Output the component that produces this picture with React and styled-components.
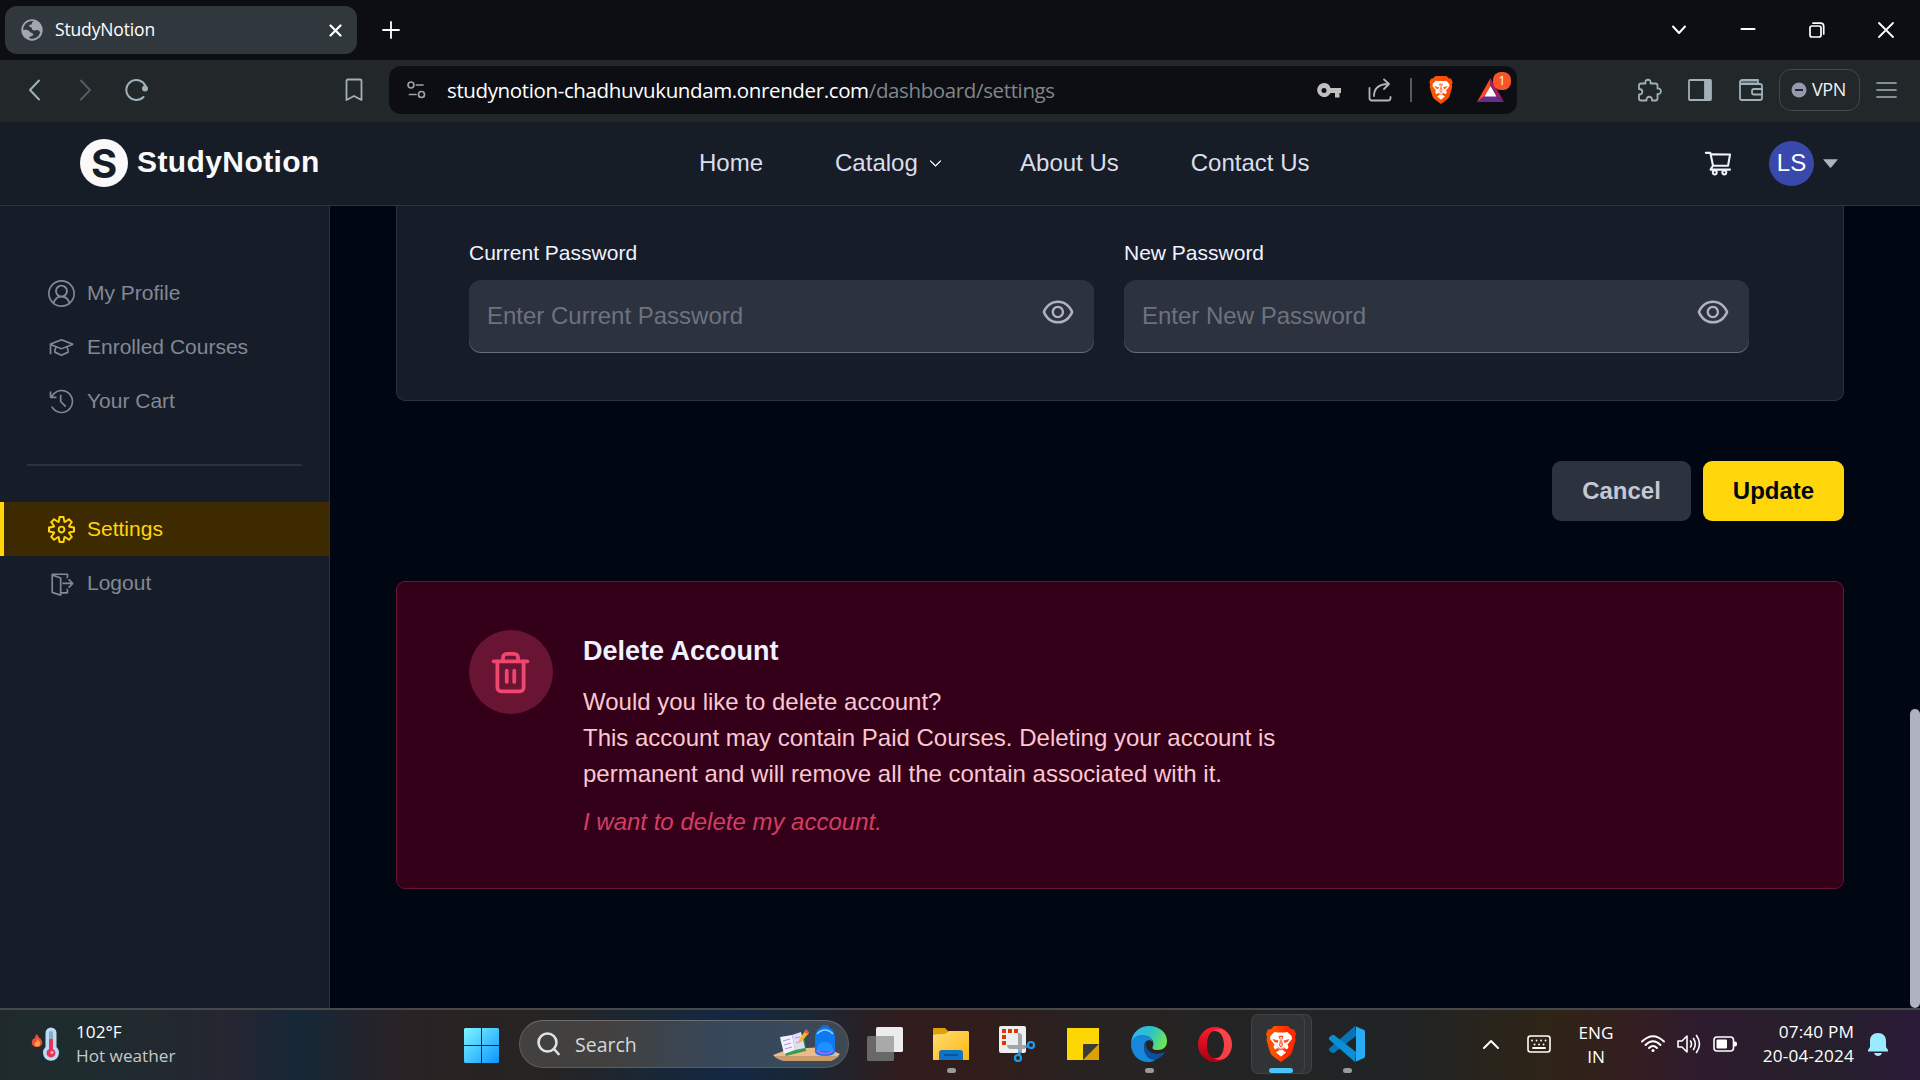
import React from "react";
import styled, { createGlobalStyle } from "styled-components";
import {
  VscAccount,
  VscMortarBoard,
  VscHistory,
  VscSettingsGear,
  VscSignOut,
} from "react-icons/vsc";
import { AiOutlineShoppingCart, AiFillCaretDown, AiOutlineEye } from "react-icons/ai";
import { BsChevronDown } from "react-icons/bs";
import { FiTrash2 } from "react-icons/fi";

const GlobalStyle = createGlobalStyle`
  * { box-sizing: border-box; }
  html, body { margin: 0; background: #000612; overflow: hidden; }
  body { font-family: "Liberation Sans", Arial, sans-serif; }
  svg { display: block; flex: none; }
  button { border: 0; font: inherit; }
`;

const uiFont = `"Open Sans", "Noto Sans", sans-serif`;

const Screen = styled.div`
  width: 1920px;
  height: 1080px;
  display: grid;
  grid-template-rows: 60px 62px 84px 802px 72px;
  overflow: hidden;
`;

/* ---------- browser chrome ---------- */

const TabStrip = styled.div`
  display: flex;
  align-items: center;
  padding: 0 24px 0 5px;
  background: #0d0e13;
  color: #fff;
`;

const Tab = styled.div`
  width: 352px;
  height: 48px;
  border-radius: 12px;
  background: #30383d;
  display: flex;
  align-items: center;
  padding: 0 15px 0 16px;
  font: 17.5px ${uiFont};
`;

const TabTitle = styled.span`
  flex: 1;
  margin-left: 12px;
  padding-bottom: 2px;
  letter-spacing: -0.15px;
`;

const NewTab = styled.div`
  margin-left: 25px;
`;

const WindowControls = styled.div`
  margin-left: auto;
  display: grid;
  grid-template-columns: repeat(4, 69px);
  justify-items: center;
  align-items: center;
  margin-right: -24px;
`;

const Toolbar = styled.div`
  display: flex;
  align-items: center;
  padding: 0 22px 2px 28px;
  background: #22272a;
`;

const ToolIcon = styled.span`
  display: flex;
  margin-left: ${(p) => p.$gap || 0}px;
`;

const AddressBar = styled.div`
  width: 1128px;
  height: 48px;
  margin-left: 26px;
  border-radius: 12px;
  background: #0d0e13;
  display: flex;
  align-items: center;
  padding: 0 13px 0 18px;
`;

const Url = styled.div`
  margin-left: 21px;
  margin-right: auto;
  font: 20.5px ${uiFont};
  letter-spacing: -0.37px;
  color: #fff;
  white-space: nowrap;
`;

const UrlPath = styled.span`
  color: #80868b;
`;

const BarDivider = styled.span`
  width: 2px;
  height: 24px;
  margin-left: 18px;
  background: #55585c;
`;

const BadgeHost = styled.span`
  position: relative;
  margin-left: 24px;
`;

const CountBadge = styled.span`
  position: absolute;
  left: 16px;
  top: -6px;
  width: 18px;
  height: 18px;
  border-radius: 8px;
  background: #fb542b;
  color: #fff;
  font: 12px/18px ${uiFont};
  text-align: center;
`;

const VpnPill = styled.div`
  width: 81px;
  height: 42px;
  margin-left: 16px;
  border: 1px solid #3f4a4e;
  border-radius: 12px;
  display: flex;
  align-items: center;
  gap: 5px;
  padding-left: 11px;
  color: #f1f1f4;
  font: 18px ${uiFont};
  letter-spacing: -0.4px;
`;

const VpnText = styled.span`
  padding-bottom: 2px;
`;

/* ---------- site header ---------- */

const Header = styled.header`
  display: flex;
  align-items: center;
  padding: 0 79px 1px 80px;
  background: #161d27;
  border-bottom: 1px solid #2c333f;
`;

const Brand = styled.div`
  width: 619px;
  display: flex;
  align-items: center;
  gap: 9px;
  color: #f9f9f9;
`;

const BrandMark = styled.span`
  width: 48px;
  height: 48px;
  border-radius: 50%;
  background: #f9f9f9;
  color: #161d27;
  display: flex;
  align-items: center;
  justify-content: center;
  font: 700 40px Inter, sans-serif;
`;

const BrandName = styled.span`
  font: 700 30px "Liberation Sans", Arial, sans-serif;
  letter-spacing: 0.4px;
  padding-bottom: 3px;
`;

const Nav = styled.nav`
  display: flex;
  align-items: center;
  gap: 72px;
  color: #dbddea;
  font-size: 24px;
`;

const NavItem = styled.span`
  display: flex;
  align-items: center;
  gap: 11px;
  width: ${(p) => p.$width || "auto"};
  white-space: nowrap;
`;

const Actions = styled.div`
  margin-left: auto;
  display: flex;
  align-items: center;
  color: #f1f2ff;
`;

const Avatar = styled.span`
  width: 45px;
  height: 45px;
  margin: 0 6px 0 36px;
  border-radius: 50%;
  background: #3949ab;
  color: #fff;
  display: flex;
  align-items: center;
  justify-content: center;
  font-size: 24px;
`;

const CaretTint = styled.span`
  color: #afb2bf;
`;

/* ---------- dashboard ---------- */

const Dashboard = styled.div`
  display: grid;
  grid-template-columns: 330px 1fr 10px;
  background: #000612;
  overflow: hidden;
`;

const Sidebar = styled.aside`
  background: #161d29;
  border-right: 1px solid #2c333f;
  padding-top: 60px;
`;

const SideLink = styled.div`
  height: 54px;
  display: flex;
  align-items: center;
  gap: 12px;
  padding-left: 44px;
  border-left: 4px solid ${(p) => (p.$active ? "#ffd60a" : "transparent")};
  background: ${(p) => (p.$active ? "#3d2a01" : "transparent")};
  color: ${(p) => (p.$active ? "#ffd60a" : "#838894")};
  font-size: 21px;
`;

const SideRule = styled.div`
  height: 2px;
  margin: 36px 27px;
  background: #2c333f;
`;

const Content = styled.main`
  padding: 0 66px;
`;

const PasswordCard = styled.section`
  height: 195px;
  padding: 31px 94px 0 72px;
  border: 1px solid #2c333f;
  border-top: 0;
  border-radius: 0 0 9px 9px;
  background: #161d29;
  display: flex;
  gap: 30px;
`;

const Field = styled.label`
  width: 625px;
  display: flex;
  flex-direction: column;
  gap: 13px;
  color: #f1f2ff;
  font-size: 21px;
  line-height: 28px;
`;

const FieldLabel = styled.span`
  padding-top: 2px;
`;

const InputBox = styled.div`
  height: 72px;
  display: flex;
  align-items: center;
  justify-content: space-between;
  padding: 0 18px;
  border-radius: 12px;
  background: #2c333f;
  box-shadow: 0 1px 0 rgba(255, 255, 255, 0.36);
  color: #6e727f;
  font-size: 24px;
`;

const EyeWrap = styled.span`
  color: #afb2bf;
  padding-bottom: 8px;
`;

const ButtonRow = styled.div`
  display: flex;
  justify-content: flex-end;
  gap: 12px;
  margin: 60px 0;
`;

const ActionButton = styled.button`
  width: ${(p) => (p.$primary ? 141 : 139)}px;
  height: 60px;
  padding: 0;
  border-radius: 9px;
  background: ${(p) => (p.$primary ? "#ffd60a" : "#2c333f")};
  color: ${(p) => (p.$primary ? "#000814" : "#c5c7d4")};
  font-size: 24px;
  font-weight: 700;
`;

const DangerCard = styled.section`
  height: 308px;
  padding: 48px 72px;
  border: 1px solid #691432;
  border-radius: 9px;
  background: #340019;
  display: flex;
  gap: 30px;
`;

const TrashCircle = styled.div`
  width: 84px;
  height: 84px;
  padding-right: 2px;
  border-radius: 50%;
  background: #691432;
  color: #ef476f;
  display: flex;
  align-items: center;
  justify-content: center;
`;

const DangerBody = styled.div`
  width: 720px;
  font-size: 24px;
  line-height: 36px;
  color: #fbc7d1;
`;

const DangerTitle = styled.h2`
  margin: 0 0 12px;
  font-size: 27px;
  font-weight: 700;
  line-height: 42px;
  color: #f1f2ff;
`;

const Paragraph = styled.p`
  margin: 0;
`;

const DangerLink = styled.p`
  margin: 12px 0 0;
  font-style: italic;
  color: #d43d63;
`;

const ScrollTrack = styled.div`
  display: flex;
  align-items: flex-end;
`;

const ScrollThumb = styled.div`
  width: 10px;
  height: 299px;
  border-radius: 5px;
  background: #afb2bf;
`;

/* ---------- taskbar ---------- */

const Taskbar = styled.footer`
  display: grid;
  grid-template-columns: 464px 55px 330px 3px 528px 1fr;
  align-items: center;
  border-top: 2px solid #47484a;
  font-family: ${uiFont};
  color: #fff;
  background: linear-gradient(
    90deg,
    #202a2c 0,
    #1e2c2e 80px,
    #252631 230px,
    #162737 300px,
    #2a2225 400px,
    #272421 540px,
    #192735 650px,
    #142844 730px,
    #192735 800px,
    #301c1d 900px,
    #311d1b 980px,
    #272322 1100px,
    #202425 1400px,
    #2f2417 1550px,
    #341e21 1640px,
    #2e1b2e 1700px,
    #25202b 1830px,
    #2c1a39 1920px
  );
`;

const Weather = styled.div`
  display: flex;
  align-items: center;
  gap: 15px;
  padding: 0 0 2px 31px;
  font-size: 17.2px;
  line-height: 24px;
`;

const TwoLines = styled.div`
  display: flex;
  flex-direction: column;
  align-items: ${(p) => p.$align || "flex-start"};
  letter-spacing: ${(p) => p.$spacing || "0"};
  white-space: nowrap;
`;

const Muted = styled.span`
  color: #c6c8ca;
`;

const SearchPill = styled.div`
  height: 48px;
  margin-top: -2px;
  border: 1px solid #5d5d5f;
  border-top-color: #6e6e71;
  border-radius: 24px;
  display: flex;
  align-items: center;
  padding: 0 8px 0 17px;
  background: linear-gradient(90deg, #434140 0, #434140 90px, #36475a 200px, #37495b 270px, #414850 330px);
  color: #d6d9dc;
  font-size: 19.5px;
`;

const SearchText = styled.span`
  flex: 1;
  margin-left: 15px;
`;

const Apps = styled.div`
  display: grid;
  grid-template-columns: repeat(8, 66px);
  height: 70px;
`;

const AppSlot = styled.div`
  display: grid;
  grid-template-rows: 34px 5px;
  row-gap: 7px;
  padding-top: 17px;
  justify-items: center;
  align-items: center;
  align-content: start;
`;

const Indicator = styled.span`
  width: ${(p) => (p.$active ? 24 : 9)}px;
  height: 5px;
  border-radius: 3px;
  background: ${(p) => (p.$active ? "#4cc2ff" : "#9a9a9b")};
`;

const ActiveTile = styled.div`
  width: 54px;
  height: 60px;
  margin: 4px 0 0 3px;
  padding: 12px 0 0 6px;
  border: 1px solid #414243;
  border-radius: 7px;
  background: #323334;
  box-shadow: 7px 0 0 -1px #303132, 7px 0 0 0 #414243;
  display: grid;
  grid-template-rows: 34px 5px;
  row-gap: 7px;
  justify-items: center;
  align-items: center;
  align-content: start;
`;

const Tray = styled.div`
  display: flex;
  align-items: center;
  padding: 0 32px 2px 103px;
  font-size: 17.2px;
  line-height: 24px;
`;

const TrayItem = styled.span`
  display: flex;
  width: ${(p) => p.$width || "auto"};
  justify-content: ${(p) => p.$justify || "flex-start"};
  margin-left: ${(p) => p.$gap || 0}px;
  padding-top: ${(p) => p.$drop || 0}px;
`;

/* ---------- drawings ---------- */

const Line = ({ w, h, color = "#fff", sw = 2, children }) => (
  <svg
    width={w}
    height={h}
    viewBox={`0 0 ${w} ${h}`}
    fill="none"
    stroke={color}
    strokeWidth={sw}
    strokeLinecap="round"
    strokeLinejoin="round"
  >
    {children}
  </svg>
);

const toolColor = "#a0b1b9";

const Globe = () => (
  <svg width="22" height="22" viewBox="0 0 22 22">
    <circle cx="11" cy="11" r="10.7" fill="#a3a6ae" />
    <path d="M13 2.2C10.6 3 10.7 4.4 10.9 5.4C8.4 5.3 7.8 6.4 8.3 7.5C9 8.5 11 8 11 9.7C11 11.4 12.6 11.7 14.6 11.2C17.4 10.5 18.6 12.3 19.2 13.4A8.8 8.8 0 0 1 8.2 19.3C8 17.8 9.3 17.2 11.1 16.9C12.5 16.6 12.6 14.7 11.2 14.3C9 13.8 8.3 11.5 6.2 11.1C4.4 10.7 3.1 10.9 2.2 11A8.8 8.8 0 0 1 13 2.2Z" fill="#30383d" />
  </svg>
);

const BraveMark = ({ width, height, from, to }) => (
  <svg width={width} height={height} viewBox="0 0 30 36">
    <defs>
      <linearGradient id={`brave-${width}`}>
        <stop offset="0.3" stopColor={from} />
        <stop offset="0.7" stopColor={to} />
      </linearGradient>
    </defs>
    <path
      d="M8 0H22L25 3L28 3.5L30 8L29 11L29.5 14L26 26Q25 29 22 31L15 36L8 31Q5 29 4 26L.5 14L1 11L0 8L2 3.5L5 3Z"
      fill={`url(#brave-${width})`}
    />
    <path
      d="M8.500 6L12 6.500H18L21.500 6L25.500 10L26 13L21.500 18.500L22.500 21L21 23.500L18.500 22L16 23.500L20 26.500L15 30.500L10 26.500L14 23.500L11.500 22L9 23.500L7.500 21L8.500 18.500L4 13L4.500 10Z"
      fill="#fff"
    />
    <path
      d="M6.500 13L12.500 14.500L11.500 17L8.500 16ZM23.500 13L17.500 14.500L18.500 17L21.500 16ZM12.500 10L15 9.500L17.500 10L16 14L17 19.500L15 21.500L13 19.500L14 14ZM10.500 19.500L15 23L19.500 19.500L15 24.500Z"
      fill={to}
      opacity="0.85"
    />
    <path d="M14.300 11H15.700L15.200 17L16 19.500H14L14.800 17Z" fill="#fff" />
  </svg>
);

const BatMark = () => (
  <svg width="27" height="24" viewBox="0 0 27 24">
    <path d="M13.5 0L0 24L8 18L13.5 8Z" fill="#ff4724" />
    <path d="M13.5 0L27 24L19 18L13.5 8Z" fill="#9e1f63" />
    <path d="M0 24H27L19 18H8Z" fill="#662d91" />
    <path d="M13.5 8L19.5 18.5H7.5Z" fill="#fff" />
  </svg>
);

const Thermometer = () => (
  <svg width="30" height="36" viewBox="0 0 30 36">
    <path d="M5.5 8C7 10 8 10.500 8.300 12C9.500 11.500 9.800 13 11 15C12 19 9 21 6 21C3 21 0 19 1 15C1.500 13 2.500 12.500 3 13C4 11 4.500 10 5.500 8Z" fill="#e8503a" />
    <path d="M6.500 13C8 15 9.500 16 9 18.500C8.500 21 4 21 3.500 18.500C3.500 16.500 6 16 6.500 13Z" fill="#ffa63b" />
    <path d="M14.500 7A5.500 5.500 0 0 1 25.500 7V21A8 8 0 1 1 14.500 21Z" fill="#b9dcf7" />
    <rect x="18" y="5" width="4" height="13" rx="2" fill="#93a9ba" />
    <path d="M18 13H22V23A4.500 4.500 0 1 1 18 23Z" fill="#e93457" />
    <circle cx="21" cy="26.500" r="1.500" fill="#ffb0bd" />
  </svg>
);

const WindowsLogo = () => (
  <svg width="35" height="35" viewBox="0 0 35 35">
    <defs>
      <linearGradient id="win" x1="0" y1="0" x2="1" y2="1">
        <stop offset="0" stopColor="#7ff6ff" />
        <stop offset="1" stopColor="#0b96fb" />
      </linearGradient>
    </defs>
    <path d="M1 0H17V17H0V1ZM18 0H34L35 1V17H18ZM0 18H17V35H1L0 34ZM18 18H35V34L34 35H18Z" fill="url(#win)" />
  </svg>
);

const DeskArt = () => (
  <svg width="67" height="38" viewBox="0 0 67 38">
    <path d="M0 30L16 24L52 22L67 29Q61 36 56 36H12Q5 35 0 30Z" fill="#e8bd8b" />
    <path d="M1 31H66Q60 36 56 36H12Q5 35 1 31Z" fill="#c99c6b" />
    <path d="M7 15L31 12L33 26L13 31Z" fill="#3d9b4e" />
    <path d="M7 12L19 10L22 25L11 29Z" fill="#f3efff" />
    <path d="M19 10L28 7L32 23L22 25Z" fill="#e2daf6" />
    <path d="M10 16L17 14M11 20L18 18M12 24L19 22M22 13L27 12M23 18L29 16" stroke="#a89cc9" strokeWidth="1" />
    <path d="M25 18L27 13L33 5L36 8L29 16Z" fill="#f8b62f" />
    <path d="M31 7L33 4L36 7L34 9Z" fill="#f0554a" />
    <path d="M48 3Q52 -2 56 3" fill="none" stroke="#1768d8" strokeWidth="2" />
    <path d="M42 12Q43 2 52 2Q61 2 62 12V27Q61 31 52 31Q43 31 42 27Z" fill="#0f7af0" />
    <path d="M44 9Q52 1 60 9" fill="none" stroke="#7fd6ff" strokeWidth="1.500" />
    <path d="M44 26V24Q45 17 52 17Q59 17 60 24V26Z" fill="#1b93ff" />
    <path d="M44 25Q46 28.500 52 28.500Q58 28.500 60 25" fill="none" stroke="#a861f0" strokeWidth="2" />
  </svg>
);

const TaskView = () => (
  <svg width="36" height="34" viewBox="0 0 36 34">
    <rect x="9" y="0" width="27" height="25" rx="1.500" fill="#ececec" />
    <rect x="0" y="9" width="27" height="25" rx="1.500" fill="#686868" />
    <path d="M9 9H27V25H9Z" fill="#a9a9a9" />
  </svg>
);

const Explorer = () => (
  <svg width="36" height="34" viewBox="0 0 36 34">
    <defs>
      <linearGradient id="fold" x1="0" y1="0" x2="1" y2="1">
        <stop offset="0" stopColor="#ffdc75" />
        <stop offset="1" stopColor="#fbb80f" />
      </linearGradient>
    </defs>
    <path d="M0 2Q0 1 1 1H12L16 5V12H0Z" fill="#e0a106" />
    <path d="M0 8Q1 7 12 7L16 4H35L36 5V33H0Z" fill="url(#fold)" />
    <path d="M6 33V26Q6 23 9 23H27Q30 23 30 26V33Z" fill="#0f73c6" />
    <path d="M11 28H25" stroke="#0a4c91" strokeWidth="1.500" />
  </svg>
);

const Snip = () => (
  <svg width="36" height="36" viewBox="0 0 36 36">
    <rect width="27" height="27" rx="2" fill="#eceef0" />
    <path d="M3 3h4v4H3zM9 3h4v4H9zM15 3h4v4h-4zM3 9h4v4H3zM3 15h4v4H3z" fill="#d83b01" />
    <path d="M19 7Q23 7 23 10V27H19ZM8 19H26V23H12Q8 23 8 19Z" fill="#9fa5ab" />
    <circle cx="32" cy="19" r="3" fill="none" stroke="#1e9be6" strokeWidth="2.200" />
    <circle cx="19" cy="32" r="3" fill="none" stroke="#1e9be6" strokeWidth="2.200" />
    <path d="M29 20L26 21M20 29L21 26" stroke="#1e9be6" strokeWidth="2.500" />
  </svg>
);

const StickyNote = () => (
  <svg width="32" height="32" viewBox="0 0 32 32">
    <path d="M0 0H32V32H0Z" fill="#fdd703" />
    <path d="M16 32L32 16V32Z" fill="#dda006" />
    <path d="M16 17Q16 16 17 16H32L16 32Z" fill="#3b3a39" />
  </svg>
);

const EdgeLogo = () => (
  <svg width="36" height="36" viewBox="0 0 36 36">
    <defs>
      <linearGradient id="edge-top" x1="0" y1="0.300" x2="1" y2="0.600">
        <stop offset="0" stopColor="#2fb4f0" />
        <stop offset="0.500" stopColor="#2cc3c9" />
        <stop offset="1" stopColor="#6fe84f" />
      </linearGradient>
    </defs>
    <path d="M0 17C1 6 9 0 18 0C29 0 36 7 36 15C36 21 32 24 27 24C22 24 20.500 22.500 22 20C24 16 20 10 13 9.500C7 9 2 12 0 17Z" fill="url(#edge-top)" />
    <path d="M0 18C1 11 8 8 13 9.500C18 10 21 13 22 16C18 12 13 15 13 21C13 28 19 32 25 33C22 36 20 36 17 36C7 36 0 28 0 18Z" fill="#1787d9" />
    <path d="M15 15C10 22 15 36 25 33.500C29 32 32 29 33.500 27C34 26 33 26 32 26.500C24 30 13 26 15 15Z" fill="#0d4f9c" />
  </svg>
);

const OperaLogo = () => (
  <svg width="34" height="35" viewBox="0 0 34 35">
    <defs>
      <linearGradient id="opera" x1="0" y1="0" x2="0" y2="1">
        <stop offset="0" stopColor="#ff1b2d" />
        <stop offset="1" stopColor="#a70014" />
      </linearGradient>
    </defs>
    <path fillRule="evenodd" d="M17 0A17 17.500 0 1 0 17 35A17 17.500 0 1 0 17 0ZM17 4C23 4 26 10 26 17.500S23 31 17 31S9 25 9 17.500S12 4 17 4Z" fill="url(#opera)" />
    <path d="M15 4C25 -2 34 7 34 17.500S25 37 15 31C22 33 26 26 26 17.500S22 3 15 4Z" fill="#ff5050" opacity="0.800" />
  </svg>
);

const CodeLogo = () => (
  <svg width="36" height="36" viewBox="0 0 36 36">
    <path d="M26 0L27 10L5 27L3 27L0 24.500V22.500Z" fill="#0873b7" />
    <path d="M26 36L27 26L5 9H3L0 11.500V13.500Z" fill="#0d8fd6" />
    <path d="M26 0L35 4Q36 4.500 36 6V30Q36 31.500 35 32L26 36Q27 35.500 27 34V2Q27 .5 26 0Z" fill="#29aaf4" />
  </svg>
);

const sideTop = [
  [VscAccount, "My Profile"],
  [VscMortarBoard, "Enrolled Courses"],
  [VscHistory, "Your Cart"],
];

const PasswordField = ({ label, placeholder }) => (
  <Field>
    <FieldLabel>{label}</FieldLabel>
    <InputBox>
      <span>{placeholder}</span>
      <EyeWrap>
        <AiOutlineEye size={36} />
      </EyeWrap>
    </InputBox>
  </Field>
);

const App = () => (
  <>
    <GlobalStyle />
    <Screen>
      <TabStrip>
        <Tab>
          <Globe />
          <TabTitle>StudyNotion</TabTitle>
          <Line w={13} h={13} sw={2.2}>
            <path d="M1.500 1.500L11.500 11.500M11.500 1.500L1.500 11.500" />
          </Line>
        </Tab>
        <NewTab>
          <Line w={18} h={18} sw={1.8}>
            <path d="M9 1V17M1 9H17" />
          </Line>
        </NewTab>
        <WindowControls>
          <Line w={16} h={10}>
            <path d="M2 1.500L8 8L14 1.500" />
          </Line>
          <Line w={16} h={4}>
            <path d="M1.500 1H14.500" />
          </Line>
          <Line w={16} h={16} sw={1.7}>
            <rect x="1" y="4" width="11" height="11" rx="2" />
            <path d="M4 1.200H11.500Q14.700 1.200 14.700 4.500V12" />
          </Line>
          <Line w={16} h={16} sw={1.8}>
            <path d="M1 1L15 15M15 1L1 15" />
          </Line>
        </WindowControls>
      </TabStrip>

      <Toolbar>
        <ToolIcon>
          <Line w={13} h={22} color={toolColor}>
            <path d="M11 1.500L2 11L11 20.500" />
          </Line>
        </ToolIcon>
        <ToolIcon $gap={38}>
          <Line w={13} h={22} color="#535b60">
            <path d="M2 1.500L11 11L2 20.500" />
          </Line>
        </ToolIcon>
        <ToolIcon $gap={33}>
          <Line w={24} h={23} color={toolColor}>
            <path d="M18.500 18A10 10 0 1 1 20.500 7" />
            <circle cx="20" cy="9.500" r="2" fill={toolColor} />
          </Line>
        </ToolIcon>
        <ToolIcon $gap={196}>
          <Line w={18} h={24} color={toolColor} sw={1.8}>
            <path d="M1.500 3Q1.500 1.500 3 1.500H15Q16.500 1.500 16.500 3V22L9 18L1.500 22Z" />
          </Line>
        </ToolIcon>
        <AddressBar>
          <Line w={19} h={18} color="#a0a2a5" sw={1.7}>
            <circle cx="4" cy="4" r="3" />
            <path d="M9.500 4H16M2.500 13.500H9" />
            <circle cx="14.500" cy="13.500" r="3" />
          </Line>
          <Url>
            studynotion-chadhuvukundam.onrender.com<UrlPath>/dashboard/settings</UrlPath>
          </Url>
          <svg width="24" height="15" viewBox="0 0 24 15">
            <path
              fillRule="evenodd"
              d="M7 0A7 7 0 1 0 13.500 10H18V14.500H22.500V10H24V5H13.500A7 7 0 0 0 7 0ZM7 5A2.500 2.500 0 1 1 7 10A2.500 2.500 0 1 1 7 5Z"
              fill="#bfbfbf"
            />
          </svg>
          <ToolIcon $gap={27}>
            <Line w={24} h={24} color="#b5b5b5" sw={1.8}>
              <path d="M1.500 10V20Q1.500 22.500 4 22.500H20Q22.500 22.500 22.500 20V19" />
              <path d="M6 18Q6 6.500 20 6M16 1.500L21 6L16 11" />
            </Line>
          </ToolIcon>
          <BarDivider />
          <ToolIcon $gap={17}>
            <BraveMark width={24} height={28} from="#ff5500" to="#ff4a00" />
          </ToolIcon>
          <BadgeHost>
            <BatMark />
            <CountBadge>1</CountBadge>
          </BadgeHost>
        </AddressBar>
        <ToolIcon $gap={120}>
          <Line w={25} h={24} color={toolColor} sw={1.8}>
            <path d="M4 5.500H8.500C7 .5 15 .5 13.500 5.500H18.500Q20.500 5.500 20.500 7.500V10.500C25 10 25 16.500 20.500 16V20.500Q20.500 22.500 18.500 22.500H15C15.500 17.500 9 17.500 9.500 22.500H4Q2 22.500 2 20.500V16.500C6.500 16.500 6.500 11 2 11V7.500Q2 5.500 4 5.500Z" />
          </Line>
        </ToolIcon>
        <ToolIcon $gap={26}>
          <Line w={24} h={22} color={toolColor} sw={1.8}>
            <rect x="1" y="1" width="22" height="20" rx="1" />
            <path d="M17 1H22V21H17Z" fill={toolColor} />
          </Line>
        </ToolIcon>
        <ToolIcon $gap={27}>
          <Line w={24} h={22} color={toolColor} sw={1.8}>
            <path d="M1 3.500Q1 1 3.500 1H19V5M1 3.500Q1 5 3 5H21Q23 5 23 7V19Q23 21 21 21H3Q1 21 1 19Z" />
            <path d="M3 3H18" opacity="0.5" />
            <path d="M23 10H15Q13 10 13 12V13.500Q13 15.500 15 15.500H23" />
          </Line>
        </ToolIcon>
        <VpnPill>
          <svg width="16" height="16" viewBox="0 0 16 16">
            <circle cx="8" cy="8" r="7.500" fill="#9699ad" />
            <path d="M4 8H12" stroke="#22272a" strokeWidth="2" />
          </svg>
          <VpnText>VPN</VpnText>
        </VpnPill>
        <ToolIcon $gap={16}>
          <Line w={21} h={18} color={toolColor} sw={1.7}>
            <path d="M1 2H20M1 9H20M1 16H20" />
          </Line>
        </ToolIcon>
      </Toolbar>

      <Header>
        <Brand>
          <BrandMark>S</BrandMark>
          <BrandName>StudyNotion</BrandName>
        </Brand>
        <Nav>
          <NavItem>Home</NavItem>
          <NavItem $width="113px">
            Catalog <BsChevronDown size={13} strokeWidth={1.2} />
          </NavItem>
          <NavItem>About Us</NavItem>
          <NavItem>Contact Us</NavItem>
        </Nav>
        <Actions>
          <AiOutlineShoppingCart size={30} />
          <Avatar>LS</Avatar>
          <CaretTint>
            <AiFillCaretDown size={21} />
          </CaretTint>
        </Actions>
      </Header>

      <Dashboard>
        <Sidebar>
          {sideTop.map(([Icon, label]) => (
            <SideLink key={label}>
              <Icon size={27} />
              {label}
            </SideLink>
          ))}
          <SideRule />
          <SideLink $active>
            <VscSettingsGear size={27} />
            Settings
          </SideLink>
          <SideLink>
            <VscSignOut size={27} />
            Logout
          </SideLink>
        </Sidebar>
        <Content>
          <PasswordCard>
            <PasswordField label="Current Password" placeholder="Enter Current Password" />
            <PasswordField label="New Password" placeholder="Enter New Password" />
          </PasswordCard>
          <ButtonRow>
            <ActionButton>Cancel</ActionButton>
            <ActionButton $primary>Update</ActionButton>
          </ButtonRow>
          <DangerCard>
            <TrashCircle>
              <FiTrash2 size={45} />
            </TrashCircle>
            <DangerBody>
              <DangerTitle>Delete Account</DangerTitle>
              <Paragraph>Would you like to delete account?</Paragraph>
              <Paragraph>
                This account may contain Paid Courses. Deleting your account is permanent and will
                remove all the contain associated with it.
              </Paragraph>
              <DangerLink>I want to delete my account.</DangerLink>
            </DangerBody>
          </DangerCard>
        </Content>
        <ScrollTrack>
          <ScrollThumb />
        </ScrollTrack>
      </Dashboard>

      <Taskbar>
        <Weather>
          <Thermometer />
          <TwoLines>
            <span>102°F</span>
            <Muted>Hot weather</Muted>
          </TwoLines>
        </Weather>
        <WindowsLogo />
        <SearchPill>
          <Line w={23} h={24} color="#dfe1e4" sw={2.6}>
            <circle cx="10.500" cy="10.500" r="9" />
            <path d="M17 17L21.500 22" />
          </Line>
          <SearchText>Search</SearchText>
          <DeskArt />
        </SearchPill>
        <span />
        <Apps>
          <AppSlot>
            <TaskView />
          </AppSlot>
          <AppSlot>
            <Explorer />
            <Indicator />
          </AppSlot>
          <AppSlot>
            <Snip />
          </AppSlot>
          <AppSlot>
            <StickyNote />
          </AppSlot>
          <AppSlot>
            <EdgeLogo />
            <Indicator />
          </AppSlot>
          <AppSlot>
            <OperaLogo />
          </AppSlot>
          <ActiveTile>
            <BraveMark width={30} height={36} from="#ff5000" to="#ff2a00" />
            <Indicator $active />
          </ActiveTile>
          <AppSlot>
            <CodeLogo />
            <Indicator />
          </AppSlot>
        </Apps>
        <Tray>
          <Line w={16} h={10} sw={2}>
            <path d="M1 9L8 2L15 9" />
          </Line>
          <TrayItem $gap={28}>
            <Line w={24} h={18} sw={1.6}>
              <rect x="1" y="1" width="22" height="16" rx="2.500" />
              <path d="M5 5.500h.1M9.500 5.500h.1M14 5.500h.1M18.500 5.500h.1M7.500 9.500h.1M12 9.500h.1M16.500 9.500h.1M6 13H18" strokeWidth="1.800" />
            </Line>
          </TrayItem>
          <TrayItem $width="90px" $justify="center" $drop={2}>
            <TwoLines $align="center">
              <span>ENG</span>
              <span>IN</span>
            </TwoLines>
          </TrayItem>
          <Line w={24} h={18} sw={1.9}>
            <path d="M1 6.500Q12 -4 23 6.500M4.500 10Q12 2.500 19.500 10M8 13Q12 9 16 13" />
            <circle cx="12" cy="15.500" r="1.500" fill="#fff" stroke="none" />
          </Line>
          <TrayItem $gap={12}>
            <Line w={24} h={20} sw={1.6}>
              <path d="M1 7H5L10 2V18L5 13H1ZM13.500 7Q15.500 10 13.500 13M16.500 4.500Q20 10 16.500 15.500M19.500 1.500Q25.500 10 19.500 18.500" />
            </Line>
          </TrayItem>
          <TrayItem $gap={12}>
            <svg width="24" height="16" viewBox="0 0 24 16">
              <rect x="1" y="1" width="19.500" height="14" rx="3" fill="none" stroke="#fff" strokeWidth="1.600" />
              <rect x="3.500" y="3.500" width="10.500" height="9" rx="1" fill="#fff" />
              <path d="M21 5.500H22Q24 5.500 24 7.500V8.500Q24 10.500 22 10.500H21Z" fill="#fff" />
            </svg>
          </TrayItem>
          <TrayItem $width="117px" $justify="flex-end">
            <TwoLines $align="flex-end" $spacing="0.15px">
              <span>07:40 PM</span>
              <span>20-04-2024</span>
            </TwoLines>
          </TrayItem>
          <TrayItem $gap={14}>
            <svg width="20" height="23" viewBox="0 0 20 23">
              <path d="M0 18.500V17L2 14V8C2 3 5 0 10 0S18 3 18 8V14L20 17V18.500ZM6 20H14Q13 23 10 23T6 20Z" fill="#99ebff" />
            </svg>
          </TrayItem>
        </Tray>
      </Taskbar>
    </Screen>
  </>
);

export default App;
